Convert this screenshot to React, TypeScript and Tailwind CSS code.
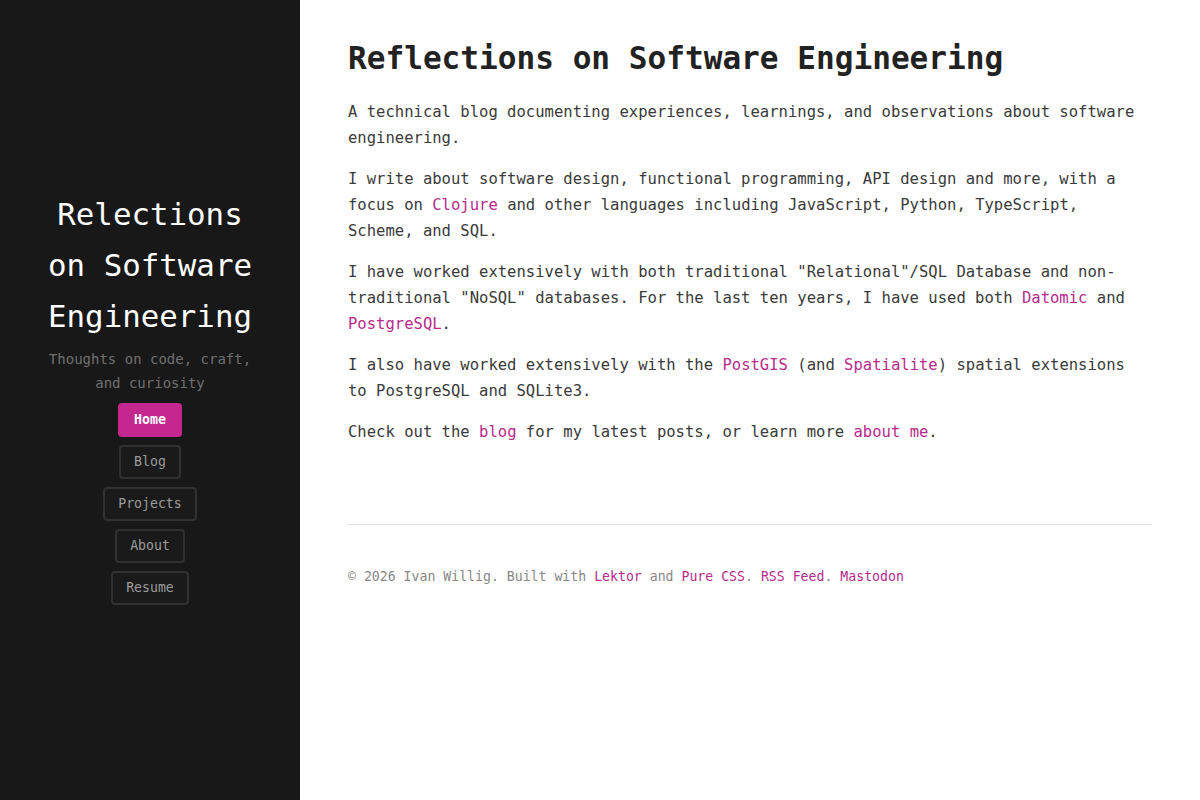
import React from "react";

const mono = { fontFamily: '"DejaVu Sans Mono", "Liberation Mono", monospace' };

function A({ children }: { children: React.ReactNode }) {
  return <a className="text-[#b82a8c] no-underline">{children}</a>;
}

const nav = ["Home", "Blog", "Projects", "About", "Resume"];

export default function App() {
  return (
    <div className="flex min-h-[800px] w-full bg-white" style={mono}>
      <aside className="flex w-[300px] shrink-0 flex-col items-center justify-center bg-[#181818] pb-[7px]">
        <h1 className="w-[220px] text-center text-[30.8px] font-normal leading-[51px] text-white">
          Relections on Software Engineering
        </h1>
        <p className="mt-[5px] w-[220px] text-center text-[14px] leading-[24px] text-[#707070]">
          Thoughts on code, craft, and curiosity
        </p>
        <nav className="mt-[8px] flex flex-col items-center gap-[8px]">
          {nav.map((n) =>
            n === "Home" ? (
              <span
                key={n}
                className="rounded-[4px] border-2 border-[#c4288f] bg-[#c4288f] px-[14px] py-[6px] text-[13.2px] font-bold leading-[18px] text-white"
              >
                {n}
              </span>
            ) : (
              <span
                key={n}
                className="rounded-[4px] border-2 border-[#303030] bg-[#1a1a1a] px-[13px] py-[6px] text-[13.2px] leading-[18px] text-[#9a9a9a]"
              >
                {n}
              </span>
            )
          )}
        </nav>
      </aside>
      <main className="flex-1 px-[48px] pt-[40px]">
        <h2 className="text-[31.1px] font-bold leading-[37px] text-[#222]">
          Reflections on Software Engineering
        </h2>
        <div className="mt-[22px] flex flex-col gap-[15px] text-[15.56px] leading-[26px] text-[#3a3a3a]">
          <p>
            A technical blog documenting experiences, learnings, and observations about software
            engineering.
          </p>
          <p>
            I write about software design, functional programming, API design and more, with a
            focus on <A>Clojure</A> and other languages including JavaScript, Python, TypeScript,
            Scheme, and SQL.
          </p>
          <p>
            I have worked extensively with both traditional "Relational"/SQL Database and non-traditional
            "NoSQL" databases. For the last ten years, I have used both <A>Datomic</A> and{" "}
            <A>PostgreSQL</A>.
          </p>
          <p>
            I also have worked extensively with the <A>PostGIS</A> (and <A>Spatialite</A>) spatial
            extensions to PostgreSQL and SQLite3.
          </p>
          <p>
            Check out the <A>blog</A> for my latest posts, or learn more <A>about me</A>.
          </p>
        </div>
        <hr className="mt-[79px] border-0 border-t border-[#e0e0e0]" />
        <footer className="mt-[42px] text-[13.2px] leading-[20px] text-[#888]">
          © 2026 Ivan Willig. Built with <A>Lektor</A> and <A>Pure CSS</A>. <A>RSS Feed</A>.{" "}
          <A>Mastodon</A>
        </footer>
      </main>
    </div>
  );
}
